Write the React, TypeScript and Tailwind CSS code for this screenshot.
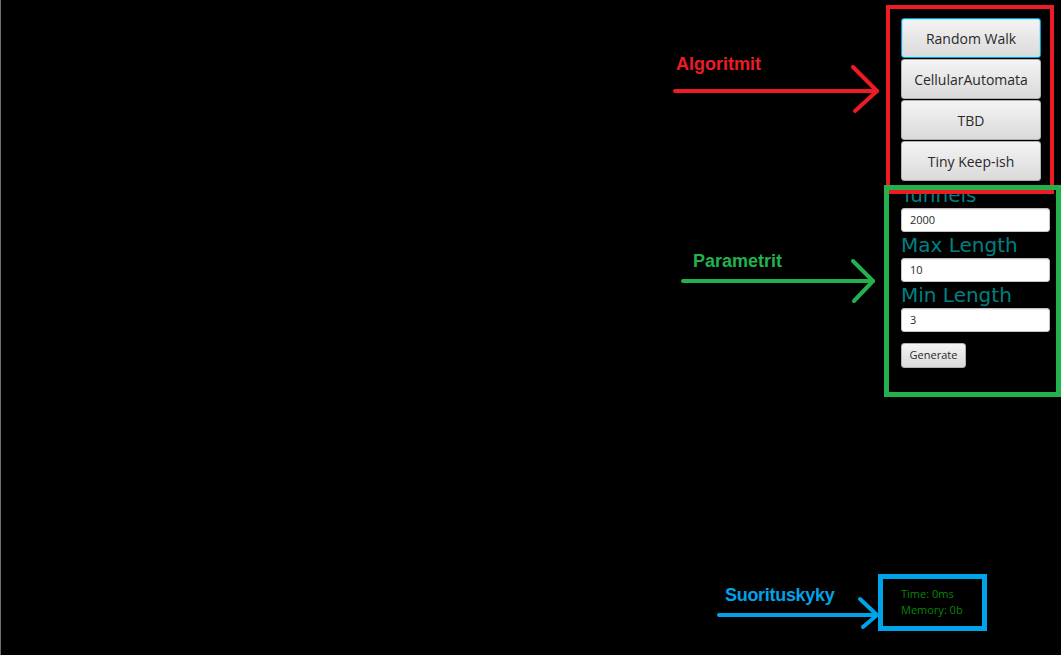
import React from "react";

const btnBase =
  "h-[40px] w-[140px] rounded-[3px] border bg-gradient-to-b from-[#f4f4f4] to-[#dadada] text-[14px] text-[#2a2a2a] flex items-center justify-center";
const btn = btnBase + " border-[#b0b0b0]";
const btnFocus = btnBase + " border-[#039ed3] shadow-[inset_0_0_0_1px_#b5e3f3]";

function Field({ label, value }: { label: string; value: string }) {
  return (
    <div className="flex flex-col">
      <div className="h-[26px] text-[20px] leading-[26px] text-[#008080] whitespace-nowrap" style={{ fontFamily: '"DejaVu Sans", Verdana, sans-serif' }}>
        {label}
      </div>
      <div className="h-[24px] w-[149px] rounded-[3px] border border-[#c4c4c4] bg-white shadow-[inset_0_1px_1px_rgba(0,0,0,0.08)] pl-[8px] flex items-center text-[11px] text-[#2a2a2a]">
        {value}
      </div>
    </div>
  );
}

export default function App() {
  return (
    <div
      className="relative w-[1061px] h-[655px] bg-black border-l border-[#6e6e6e] overflow-hidden flex justify-end"
      style={{ fontFamily: '"Open Sans", "Liberation Sans", sans-serif' }}
    >
      <div className="w-[149px] mr-[11px] flex flex-col pt-[18px] pb-[37px]">
        <div className="flex flex-col gap-px mb-px">
          <div className={btnFocus}>Random Walk</div>
          <div className={btn}>CellularAutomata</div>
          <div className={btn}>TBD</div>
          <div className={btn}>Tiny Keep-ish</div>
        </div>
        <Field label="Tunnels" value="2000" />
        <Field label="Max Length" value="10" />
        <Field label="Min Length" value="3" />
        <div className="mt-[11px] h-[25px] w-[65px] rounded-[3px] border border-[#b0b0b0] bg-gradient-to-b from-[#f4f4f4] to-[#dadada] text-[11px] text-[#2a2a2a] flex items-center justify-center">
          Generate
        </div>
        <div className="flex-1" />
        <div className="text-[11px] leading-[16px] text-[#0a850a]">
          <div>Time: 0ms</div>
          <div>Memory: 0b</div>
        </div>
      </div>

      {/* annotation overlays */}
      <div className="absolute left-[885px] top-[5px] w-[168px] h-[189px] border-4 border-[#ed1c24]" />
      <div className="absolute left-[883px] top-[185px] w-[177px] h-[212px] border-[5px] border-[#22b14c]" />
      <div className="absolute left-[877px] top-[574px] w-[109px] h-[57px] border-[5px] border-[#00a2e8]" />

      <svg className="absolute left-0 top-0" width="1061" height="655" fill="none" strokeLinecap="round" strokeLinejoin="round">
        <g stroke="#ed1c24" strokeWidth="4">
          <line x1="674" y1="91" x2="876" y2="91" />
          <polyline points="852,67 876,91 854,111" />
        </g>
        <g stroke="#22b14c" strokeWidth="4">
          <line x1="682" y1="281" x2="872" y2="281" />
          <polyline points="852,261 872,281 853,301" />
        </g>
        <g stroke="#00a2e8" strokeWidth="4">
          <line x1="718" y1="615" x2="876" y2="615" />
          <polyline points="859,599 876,615 862,627" />
        </g>
      </svg>

      <div className="absolute left-[675px] top-[52px] text-[18px] font-bold leading-[24px] text-[#ed1c24]" style={{ fontFamily: '"Liberation Sans", Arial, sans-serif' }}>
        Algoritmit
      </div>
      <div className="absolute left-[692px] top-[249px] text-[18px] font-bold leading-[24px] text-[#22b14c]" style={{ fontFamily: '"Liberation Sans", Arial, sans-serif' }}>
        Parametrit
      </div>
      <div className="absolute left-[724px] top-[583px] text-[18px] font-bold leading-[24px] text-[#00a2e8] tracking-[-0.3px]" style={{ fontFamily: '"Liberation Sans", Arial, sans-serif' }}>
        Suorituskyky
      </div>
    </div>
  );
}
